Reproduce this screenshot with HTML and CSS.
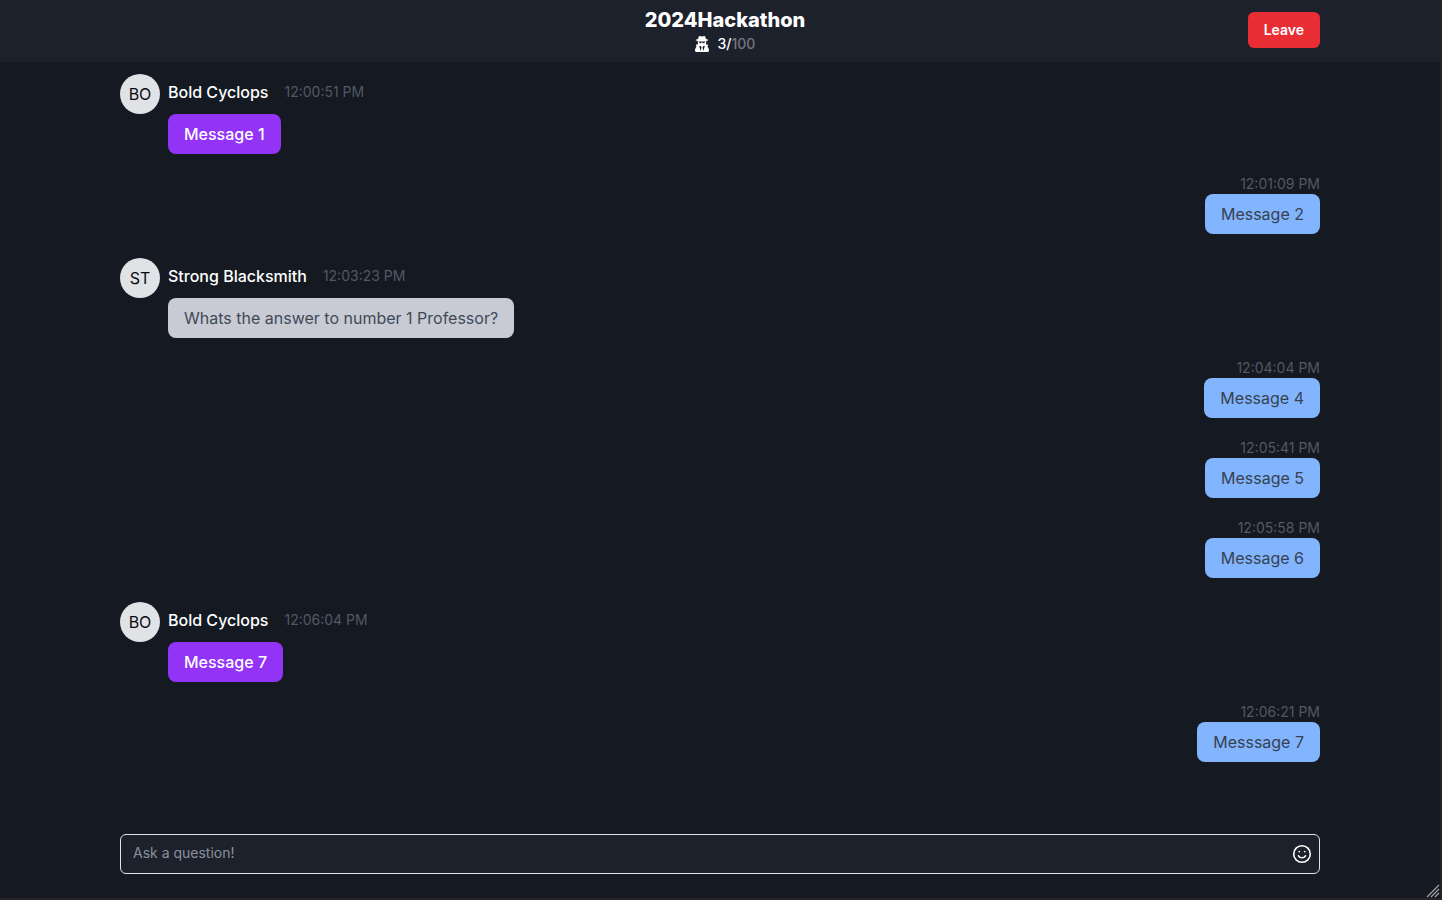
FILE: index.html
```html
<!DOCTYPE html>
<html lang="en">
<head>
<meta charset="utf-8">
<meta name="viewport" content="width=device-width, initial-scale=1">
<title>2024Hackathon</title>
<link rel="stylesheet" href="styles.css">
</head>
<body>
<div class="room">
  <header class="room-header">
    <div class="room-info">
      <h1 class="room-title">2024Hackathon</h1>
      <p class="room-count">
        <svg class="spy-icon" viewBox="0 0 14 16" aria-hidden="true">
          <path fill="currentColor" fill-rule="evenodd" d="M4.600 0C5.400 0 6.200.5 7 .5S8.600 0 9.400 0c.8 0 1.300 1.500 1.600 3 1.300.2 2.300.6 2.300 1s-.9.800-2.100 1v1.500c0 .7-.1 1.300-.3 1.900h1.700c.4 0 .6.300.5.700l-.6 1.700C13.400 11.700 14 13 14 14.500c0 .9-.6 1.500-1.500 1.500h-11C.6 16 0 15.400 0 14.500c0-1.500.6-2.800 1.500-3.700L.9 9.100c-.1-.4.100-.7.500-.7h1.700c-.2-.6-.3-1.200-.3-1.900V5C1.600 4.800.7 4.400.7 4s1-.8 2.300-1c.3-1.500.8-3 1.600-3ZM3.800 5.400v.5c.3.100.4.300.5.600.1.500.5.800 1 .8.700 0 1-.3 1.200-.9.100-.3.900-.3 1 0 .2.600.5.900 1.200.9.500 0 .9-.3 1-.8.100-.3.200-.5.500-.6v-.5ZM4.200 10l1.400 5 .9-3.500L5.700 10Zm4.100 0-.8 1.500.9 3.500 1.400-5Z"/>
        </svg>
        <span>3/<span class="room-limit">100</span></span>
      </p>
    </div>
    <button class="leave" type="button">Leave</button>
  </header>

  <main class="messages">
    <article class="message theirs">
      <span class="avatar">BO</span>
      <div class="body">
        <div class="meta"><span class="name">Bold Cyclops</span><time class="time">12:00:51 PM</time></div>
        <p class="bubble purple">Message 1</p>
      </div>
    </article>
    <article class="message mine">
      <time class="time">12:01:09 PM</time>
      <p class="bubble blue">Message 2</p>
    </article>
    <article class="message theirs">
      <span class="avatar">ST</span>
      <div class="body">
        <div class="meta"><span class="name">Strong Blacksmith</span><time class="time">12:03:23 PM</time></div>
        <p class="bubble gray">Whats the answer to number 1 Professor?</p>
      </div>
    </article>
    <article class="message mine">
      <time class="time">12:04:04 PM</time>
      <p class="bubble blue">Message 4</p>
    </article>
    <article class="message mine">
      <time class="time">12:05:41 PM</time>
      <p class="bubble blue">Message 5</p>
    </article>
    <article class="message mine">
      <time class="time">12:05:58 PM</time>
      <p class="bubble blue">Message 6</p>
    </article>
    <article class="message theirs">
      <span class="avatar">BO</span>
      <div class="body">
        <div class="meta"><span class="name">Bold Cyclops</span><time class="time">12:06:04 PM</time></div>
        <p class="bubble purple">Message 7</p>
      </div>
    </article>
    <article class="message mine">
      <time class="time">12:06:21 PM</time>
      <p class="bubble blue">Messsage 7</p>
    </article>
  </main>

  <form class="composer">
    <input class="question" type="text" placeholder="Ask a question!" aria-label="Ask a question">
    <button class="emoji" type="button" aria-label="Add emoji">
      <svg viewBox="0 0 20 20" width="20" height="20" fill="none" stroke="currentColor" stroke-width="1.6" stroke-linecap="round" aria-hidden="true">
        <circle cx="10" cy="10" r="8.300"/>
        <path d="M6.500 11.800c.7 1.200 2 1.900 3.500 1.900s2.800-.7 3.500-1.900"/>
        <circle cx="7.300" cy="7.600" r=".9" fill="currentColor" stroke="none"/>
        <circle cx="12.700" cy="7.600" r=".9" fill="currentColor" stroke="none"/>
      </svg>
    </button>
  </form>
  <svg class="grip" viewBox="0 0 14 14" width="14" height="14" stroke="#a3a5a7" stroke-width="1.200" aria-hidden="true">
    <path d="M1 13 13 1M5 13l8-8M9 13l4-4"/>
  </svg>
</div>
</body>
</html>
```
FILE: styles.css
```css
*, *::before, *::after { box-sizing: border-box; }

body {
  margin: 0;
  background: #151921;
  color: #fff;
  font-family: Inter, "Liberation Sans", sans-serif;
  font-size: 16px;
  line-height: 24px;
}

h1, p { margin: 0; }
button, input { font: inherit; }

.room {
  position: relative;
  display: flex;
  flex-direction: column;
  min-height: 100vh;
  border-right: 2px solid #242426;
  border-bottom: 2px solid #29232b;
}

.room-header {
  display: grid;
  grid-template-columns: 1fr auto 1fr;
  align-items: start;
  padding: 7px 120px 8px;
  background: #1d212b;
}

.room-info {
  grid-column: 2;
  display: flex;
  flex-direction: column;
  align-items: center;
  padding-left: 10px;
}

.room-title {
  font-size: 20px;
  font-weight: 800;
  line-height: 27px;
}

.room-count {
  display: flex;
  align-items: center;
  gap: 9px;
  font-size: 14px;
  font-weight: 500;
  line-height: 20px;
}

.spy-icon { width: 14px; height: 16px; }
.room-limit { color: #717684; }

.leave {
  justify-self: end;
  height: 36px;
  margin-top: 5px;
  padding: 0 16px;
  border: 0;
  border-radius: 6px;
  background: #e82d35;
  color: #fff;
  font-size: 14px;
  font-weight: 600;
}

.messages {
  flex: 1;
  display: flex;
  flex-direction: column;
  gap: 20px;
  padding: 8px 120px;
}

.message { display: flex; }

.theirs {
  gap: 8px;
  padding-top: 4px;
}

.mine {
  flex-direction: column;
  align-items: flex-end;
}

.avatar {
  display: grid;
  place-items: center;
  width: 40px;
  height: 40px;
  border-radius: 50%;
  background: #e1e2e6;
  color: #090b10;
}

.meta {
  display: flex;
  align-items: center;
  gap: 16px;
  height: 40px;
  padding-bottom: 4px;
}

.name { font-weight: 500; }

.time {
  color: #525866;
  font-size: 14px;
  line-height: 20px;
}

.bubble {
  width: fit-content;
  padding: 8px 16px;
  border-radius: 8px;
}

.purple { background: #9333f5; font-weight: 500; }
.blue { background: #82b5fd; color: #374151; }
.gray { background: #c8cbd4; color: #414958; }

.composer {
  display: flex;
  align-items: center;
  height: 40px;
  margin: 0 120px 24px;
  border: 1px solid #e1e2e6;
  border-radius: 6px;
  background: #1d212b;
}

.question {
  flex: 1;
  min-width: 0;
  padding: 0 12px 2px;
  border: 0;
  outline: 0;
  background: transparent;
  color: #fff;
  font-size: 14px;
}

.question::placeholder { color: #8a909c; opacity: 1; }

.emoji {
  display: grid;
  padding: 0;
  margin-right: 7px;
  border: 0;
  background: transparent;
  color: #fff;
}

.grip {
  position: absolute;
  right: 0;
  bottom: 0;
}
```
